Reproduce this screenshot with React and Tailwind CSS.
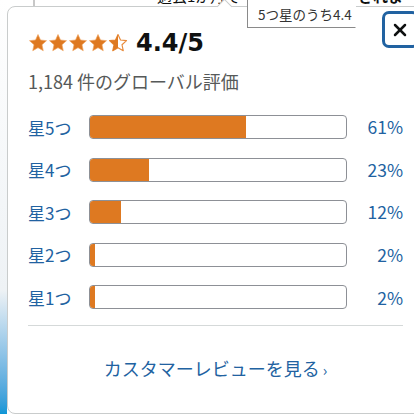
import React from 'react';
import { X } from 'lucide-react';

const STAR = 'M12 1.8l3 6.6 7.2.8-5.4 4.9 1.5 7.1L12 17.6l-6.3 3.6 1.5-7.1L1.8 9.2 9 8.4z';

function Star({ half }) {
  return (
    <svg width="20" height="20" viewBox="0 0 24 24" className="shrink-0">
      <defs>
        <clipPath id="halfClip">
          <rect x="0" y="0" width="12" height="24" />
        </clipPath>
      </defs>
      {half ? (
        <>
          <path d={STAR} fill="#fff" stroke="#e88a3a" strokeWidth="1.4" strokeLinejoin="round" />
          <path d={STAR} fill="#de7921" clipPath="url(#halfClip)" />
        </>
      ) : (
        <path d={STAR} fill="#de7921" stroke="#f0a460" strokeWidth="0.8" strokeLinejoin="round" />
      )}
    </svg>
  );
}

const rows = [
  { label: '星5つ', pct: 61 },
  { label: '星4つ', pct: 23 },
  { label: '星3つ', pct: 12 },
  { label: '星2つ', pct: 2 },
  { label: '星1つ', pct: 2 },
];

export default function App() {
  return (
    <div className="relative w-[414px] h-[414px] overflow-hidden bg-white font-['Noto_Sans_CJK_JP','Liberation_Sans',sans-serif]">
      {/* page behind the popover */}
      <div className="absolute left-0 top-0 w-[7px] h-full bg-gradient-to-b from-white via-[#eef2f5] via-70% to-[#0a96d6]" />
      <div className="absolute left-[33px] top-0 w-[2px] h-[8px] bg-[#c8c8c8]" />
      <div className="absolute left-[157px] top-[-13px] text-[15px] text-[#0f1111] leading-[18px]">過去1か月で</div>
      <div className="absolute left-[358px] top-[-13px] text-[15px] font-bold text-[#0f1111] leading-[18px]">されました</div>

      {/* popover */}
      <div className="absolute left-[7px] top-[6px] w-[417px] h-[408px] bg-white border border-[#c9cccc] rounded-lg px-[20px] pt-[25px] flex flex-col">
        <div className="absolute left-[211px] top-[-6px] w-[11px] h-[11px] rotate-45 bg-white border-l border-t border-[#c9cccc]" />

        <div className="flex items-center h-[22px]">
          <div className="flex">
            <Star />
            <Star />
            <Star />
            <Star />
            <Star half />
          </div>
          <span className="ml-[8px] font-['DejaVu_Sans',sans-serif] font-bold text-[24px] leading-none text-[#0f1111]">4.4/5</span>
        </div>

        <div className="mt-[16px] text-[18px] leading-[22px] text-[#565959]">1,184 件のグローバル評価</div>

        <div className="mt-[23px] flex flex-col gap-[18.6px]">
          {rows.map((r) => (
            <div key={r.label} className="flex items-center h-[24px]">
              <span className="w-[61px] shrink-0 text-[17px] text-[#2162a1] leading-none">{r.label}</span>
              <div className="w-[258px] h-[24px] rounded-[4px] border border-[#8d9096] overflow-hidden bg-white">
                <div className="h-full bg-[#de7921]" style={{ width: `${r.pct}%` }} />
              </div>
              <span className="flex-1 text-right text-[17.5px] text-[#2162a1] leading-none">{r.pct}%</span>
            </div>
          ))}
        </div>

        <div className="mt-[16px] border-t border-[#d5d9d9]" />

        <div className="mt-[30px] text-center text-[18px] leading-[24px] text-[#2162a1]">
          カスタマーレビューを見る<span className="ml-[3px] text-[15px]">›</span>
        </div>
      </div>

      {/* browser tooltip */}
      <div className="absolute left-[247px] top-[-2px] w-[109px] h-[30px] bg-white border border-[#8a8a8a] border-r-white pl-[10px] pt-[7px] text-[13.5px] leading-[16px] text-[#333]">
        5つ星のうち4.4
      </div>

      {/* close button */}
      <button className="absolute left-[382px] top-[11px] w-[37px] h-[37px] rounded-[7px] border-[3px] border-[#2162a1] bg-white flex items-center justify-center">
        <X size={20} strokeWidth={3} className="text-[#0f1111] ml-[-2px]" />
      </button>
    </div>
  );
}
